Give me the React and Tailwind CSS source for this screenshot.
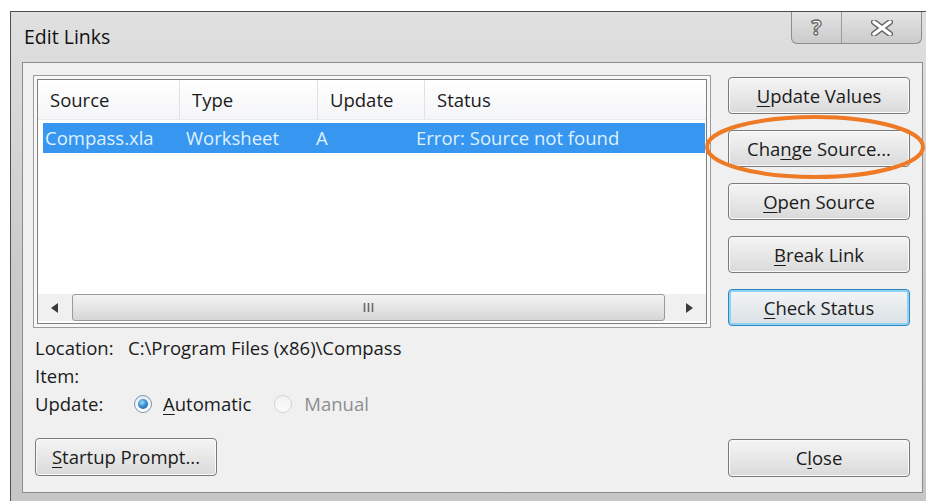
import React from 'react';

// Classic Windows 7 "Edit Links" dialog with an annotation ring on Change Source.

const font = { fontFamily: '"Open Sans", "Noto Sans", sans-serif' };

function Key({ children }) {
  return <span className="underline underline-offset-[3px] decoration-1">{children}</span>;
}

function DialogButton({ children, focused = false, className = '' }) {
  return (
    <div
      className={
        'flex items-center justify-center rounded-[4px] border text-[18.5px] text-[#1b1b1b] ' +
        (focused
          ? 'border-[#2f86c2] shadow-[inset_0_0_0_2px_#8ed3f2] bg-gradient-to-b from-[#f3f6f8] to-[#d9dfe3] '
          : 'border-[#7a7a7a] shadow-[inset_0_0_0_1px_#fafafa] bg-gradient-to-b from-[#f5f5f5] to-[#dadada] ') +
        className
      }
    >
      {children}
    </div>
  );
}

function Radio({ checked, disabled }) {
  if (disabled) {
    return <div className="w-[18px] h-[18px] rounded-full border border-[#d2d2d2] bg-gradient-to-b from-[#f2f2f2] to-[#fbfbfb]" />;
  }
  return (
    <div className="w-[18px] h-[18px] rounded-full border border-[#7c95ad] bg-gradient-to-b from-[#e4ebf2] to-[#ffffff] flex items-center justify-center">
      {checked && (
        <div className="w-[10px] h-[10px] rounded-full bg-[radial-gradient(circle_at_40%_35%,#9fdcff_0%,#3b8fd0_45%,#174f86_100%)]" />
      )}
    </div>
  );
}

function ScrollBar() {
  return (
    <div className="h-[27px] flex items-stretch bg-[#f0f0f0] mb-[2px]">
      <div className="w-[34px] flex items-center justify-center">
        <svg width="8" height="10" viewBox="0 0 8 10"><path d="M7 0 L0 5 L7 10 Z" fill="#3a3a3a" /></svg>
      </div>
      <div className="w-[593px] rounded-[3px] border border-[#9a9a9a] bg-gradient-to-b from-[#f4f4f4] to-[#d6d6d6] flex items-center justify-center">
        <svg width="12" height="11" viewBox="0 0 12 11">
          <path d="M1.5 1 V10 M5.5 1 V10 M9.5 1 V10" stroke="#6a6a6a" strokeWidth="1.6" />
        </svg>
      </div>
      <div className="w-[7px]" />
      <div className="w-[34px] flex items-center justify-center">
        <svg width="8" height="10" viewBox="0 0 8 10"><path d="M1 0 L8 5 L1 10 Z" fill="#3a3a3a" /></svg>
      </div>
    </div>
  );
}

function LinksList() {
  return (
    <div className="w-[678px] h-[253px] border border-[#9c9c9c] p-[3px] bg-[#f7f7f7] flex">
      <div className="flex-1 border border-[#7e7e7e] bg-white flex flex-col">
        {/* column headers */}
        <div className="h-[40px] flex text-[18.5px] text-[#1b1b1b] bg-gradient-to-b from-[#ffffff] to-[#f4f5f7] border-b border-[#eaeaea]">
          <div className="w-[142px] px-[12px] flex items-center border-r border-[#e2e2e2]">Source</div>
          <div className="w-[138px] px-[12px] flex items-center border-r border-[#e2e2e2]">Type</div>
          <div className="w-[107px] px-[12px] flex items-center border-r border-[#e2e2e2]">Update</div>
          <div className="flex-1 px-[12px] flex items-center">Status</div>
        </div>
        {/* selected row */}
        <div className="mt-[3px] ml-[5px] w-[662px] h-[30px] bg-[#3797f0] flex items-center text-[18.5px] text-[#dff0ff]">
          <div className="w-[141px] pl-[2px]">Compass.xla</div>
          <div className="w-[130px] pl-[2px]">Worksheet</div>
          <div className="w-[100px] pl-[2px]">A</div>
          <div className="flex-1 pl-[2px]">Error: Source not found</div>
        </div>
        <div className="flex-1" />
        <ScrollBar />
      </div>
    </div>
  );
}

export default function App() {
  return (
    <div className="relative w-[926px] h-[501px] overflow-hidden bg-white pt-[11px] pl-[10px]" style={font}>
      <div className="w-[925px] h-[500px] border-l border-t border-[#4f4f4f] bg-gradient-to-b from-[#e0e0e0] via-[#cbcbcb] to-[#c6c6c6] flex flex-col">
        {/* title bar */}
        <div className="h-[50px] flex items-start">
          <div className="self-center pl-[13px] text-[19.5px] text-[#111]">Edit Links</div>
          <div className="ml-auto mr-[13px] flex h-[32px] rounded-b-[6px] border border-t-0 border-[#8d8d8d] overflow-hidden bg-gradient-to-b from-[#e4e4e4] to-[#cbcbcb]">
            <div className="w-[50px] flex items-center justify-center border-r border-[#9c9c9c] text-[21px] font-bold text-white [-webkit-text-stroke:1.3px_#666]">?</div>
            <div className="w-[79px] flex items-center justify-center">
              <svg width="22" height="16" viewBox="0 0 22 16">
                <path d="M3 2 L19 14 M19 2 L3 14" stroke="#666" strokeWidth="6" strokeLinecap="round" />
                <path d="M3 2 L19 14 M19 2 L3 14" stroke="#ffffff" strokeWidth="3.4" strokeLinecap="round" />
              </svg>
            </div>
          </div>
        </div>

        {/* client area */}
        <div className="ml-[11px] w-[901px] h-[431px] border border-[#8c8c8c] bg-[#f0f0f0] flex pl-[10px] pr-[12px] pt-[12px] pb-[15px] gap-[17px] text-[18.5px] text-[#1b1b1b]">
          <div className="w-[678px] flex flex-col">
            <LinksList />
            <div className="mt-[6px] ml-[2px] flex flex-col">
              <div className="h-[28px] flex items-center">
                <span className="w-[93px]">Location:</span>
                <span>C:\Program Files (x86)\Compass</span>
              </div>
              <div className="h-[28px] flex items-center">Item:</div>
              <div className="h-[28px] flex items-center">
                <span className="w-[99px]">Update:</span>
                <Radio checked />
                <span className="ml-[11px]"><Key>A</Key>utomatic</span>
                <div className="ml-[23px]"><Radio disabled /></div>
                <span className="ml-[12px] text-[#8e8e8e]">Manual</span>
              </div>
            </div>
            <DialogButton className="mt-[20px] ml-[2px] w-[182px] h-[38px]">
              <span><Key>S</Key>tartup Prompt...</span>
            </DialogButton>
          </div>

          <div className="w-[182px] flex flex-col gap-[16px] pt-[2px]">
            <DialogButton className="h-[37px]"><span><Key>U</Key>pdate Values</span></DialogButton>
            <DialogButton className="h-[37px]"><span>Cha<Key>n</Key>ge Source...</span></DialogButton>
            <DialogButton className="h-[37px]"><span><Key>O</Key>pen Source</span></DialogButton>
            <DialogButton className="h-[37px]"><span><Key>B</Key>reak Link</span></DialogButton>
            <DialogButton focused className="h-[37px]"><span><Key>C</Key>heck Status</span></DialogButton>
            <DialogButton className="mt-auto h-[38px]"><span>C<Key>l</Key>ose</span></DialogButton>
          </div>
        </div>
      </div>

      {/* annotation ring */}
      <svg className="absolute left-[703px] top-[113px]" width="224" height="68" viewBox="0 0 224 68">
        <ellipse cx="112" cy="34" rx="108" ry="30" fill="none" stroke="#ee7a25" strokeWidth="4" />
      </svg>
    </div>
  );
}
